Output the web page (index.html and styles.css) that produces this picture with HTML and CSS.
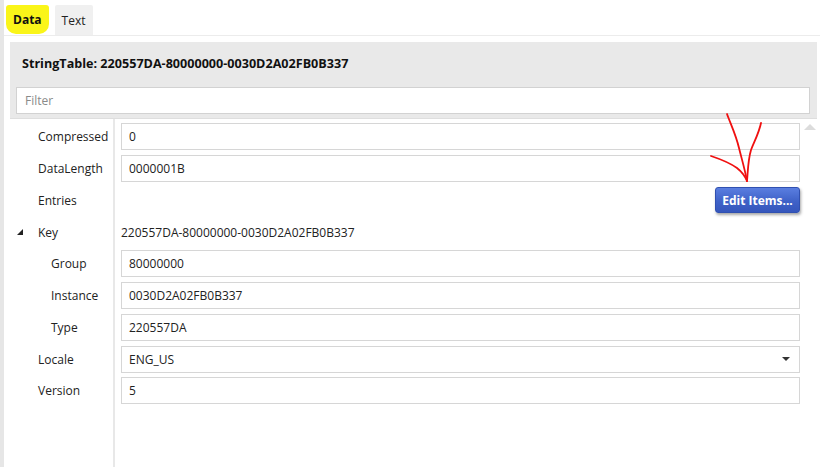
FILE: index.html
```html
<!DOCTYPE html>
<html>
<head>
<meta charset="utf-8">
<link rel="stylesheet" href="styles.css">
</head>
<body>
<div class="window">
  <div class="edge"></div>
  <div class="main">
    <div class="tabs">
      <div class="tab tab-active">Data</div>
      <div class="tab">Text</div>
    </div>
    <div class="header">
      <div class="title">StringTable: 220557DA-80000000-0030D2A02FB0B337</div>
      <div class="filter">Filter</div>
    </div>
    <div class="body">
      <div class="props">
        <div class="row"><div class="label">Compressed</div><div class="value"><div class="input">0</div></div></div>
        <div class="row"><div class="label">DataLength</div><div class="value"><div class="input">0000001B</div></div></div>
        <div class="row"><div class="label">Entries</div><div class="value value-right"><button class="btn">Edit Items...</button></div></div>
        <div class="row"><div class="label"><span class="caret"></span>Key</div><div class="value"><div class="plain">220557DA-80000000-0030D2A02FB0B337</div></div></div>
        <div class="row"><div class="label nested">Group</div><div class="value"><div class="input">80000000</div></div></div>
        <div class="row"><div class="label nested">Instance</div><div class="value"><div class="input">0030D2A02FB0B337</div></div></div>
        <div class="row"><div class="label nested">Type</div><div class="value"><div class="input">220557DA</div></div></div>
        <div class="row"><div class="label">Locale</div><div class="value"><div class="input combo"><span>ENG_US</span><span class="drop"></span></div></div></div>
        <div class="row"><div class="label">Version</div><div class="value"><div class="input">5</div></div></div>
      </div>
      <div class="scroll"><span class="up"></span></div>
    </div>
  </div>
</div>
<svg class="scribble" width="820" height="467" viewBox="0 0 820 467">
  <path d="M727 114 C731 125 736 135 739 148 C742 160 745 170 747 181" />
  <path d="M761 123 C759 133 754 142 751 150 C748 160 748 170 747 181" />
  <path d="M711 156 C720 159 730 163 737 168 C742 172 745 176 747 181" />
</svg>
</body>
</html>
```

FILE: styles.css
```css
html, body {
  margin: 0;
  padding: 0;
  background: #ffffff;
}
body {
  font-family: "Open Sans", "Noto Sans", sans-serif;
  font-size: 12px;
  color: #1a1a1a;
  width: 820px;
  height: 467px;
  overflow: hidden;
  position: relative;
}
.window {
  display: flex;
  height: 467px;
}
.edge {
  width: 4px;
  background: #e6e6e6;
  flex: none;
}
.main {
  flex: 1;
  display: flex;
  flex-direction: column;
  min-width: 0;
}
.tabs {
  display: flex;
  align-items: flex-end;
  gap: 6px;
  height: 36px;
  padding-left: 2px;
  border-bottom: 1px solid #ececec;
  box-sizing: border-box;
}
.tab {
  height: 30px;
  padding: 0 7px;
  display: flex;
  align-items: center;
  background: #f0f0f0;
  border-radius: 2px 2px 0 0;
  font-size: 12px;
  color: #222;
}
.tab-active {
  background: #faf519;
  font-weight: 700;
  color: #111;
  border-radius: 3px 3px 10px 10px;
  height: 29px;
  margin-bottom: 1px;
}
.header {
  margin: 6px 3px 0 6px;
  background: #e9e9e9;
  height: 77px;
  box-sizing: border-box;
  padding: 13px 7px 0 6px;
  border-bottom: 1px solid #dedede;
}
.title {
  font-weight: 700;
  font-size: 12.6px;
  color: #111;
  padding-left: 6px;
  height: 32px;
}
.filter {
  height: 27px;
  box-sizing: border-box;
  background: #fff;
  border: 1px solid #d2d2d2;
  color: #8a8a8a;
  padding-left: 8px;
  display: flex;
  align-items: center;
}
.body {
  flex: 1;
  display: flex;
}
.props {
  flex: 1;
  padding-top: 2px;
  background: linear-gradient(to right, transparent 109px, #e8e8e8 109px, #e8e8e8 111px, transparent 111px);
}
.row {
  display: flex;
  height: 31.75px;
  align-items: center;
}
.label {
  width: 107px;
  flex: none;
  box-sizing: border-box;
  padding-left: 34px;
  display: flex;
  align-items: center;
  color: #222;
}
.label.nested {
  padding-left: 47px;
}
.caret {
  margin-left: -21px;
  margin-right: 15px;
  width: 0;
  height: 0;
  border-left: 6px solid transparent;
  border-bottom: 6px solid #222;
}
.value {
  flex: 1;
  padding-left: 10px;
  display: flex;
}
.value-right {
  justify-content: flex-end;
}
.input {
  flex: 1;
  height: 27px;
  box-sizing: border-box;
  border: 1px solid #d6d6d6;
  background: #fff;
  display: flex;
  align-items: center;
  padding-left: 7px;
  color: #222;
}
.plain {
  padding-left: 0;
  color: #222;
}
.combo {
  justify-content: space-between;
  padding-right: 9px;
}
.drop {
  width: 0;
  height: 0;
  border-left: 4px solid transparent;
  border-right: 4px solid transparent;
  border-top: 4px solid #333;
}
.btn {
  width: 85px;
  height: 26px;
  border: 1px solid #3050b0;
  border-radius: 3px;
  background: linear-gradient(#5a7ee0, #3f62c8 55%, #3556bc);
  color: #fff;
  font-family: "Open Sans", sans-serif;
  font-weight: 700;
  font-size: 12px;
  box-shadow: 1px 2px 3px rgba(0,0,0,0.35);
  padding: 0;
}
.scroll {
  width: 20px;
  flex: none;
  position: relative;
}
.up {
  position: absolute;
  left: 4px;
  top: 5px;
  width: 0;
  height: 0;
  border-left: 6px solid transparent;
  border-right: 6px solid transparent;
  border-bottom: 6px solid #dcdcdc;
}
.scribble {
  position: absolute;
  left: 0;
  top: 0;
  pointer-events: none;
}
.scribble path {
  fill: none;
  stroke: #f01010;
  stroke-width: 1.8;
  stroke-linecap: round;
}
```
